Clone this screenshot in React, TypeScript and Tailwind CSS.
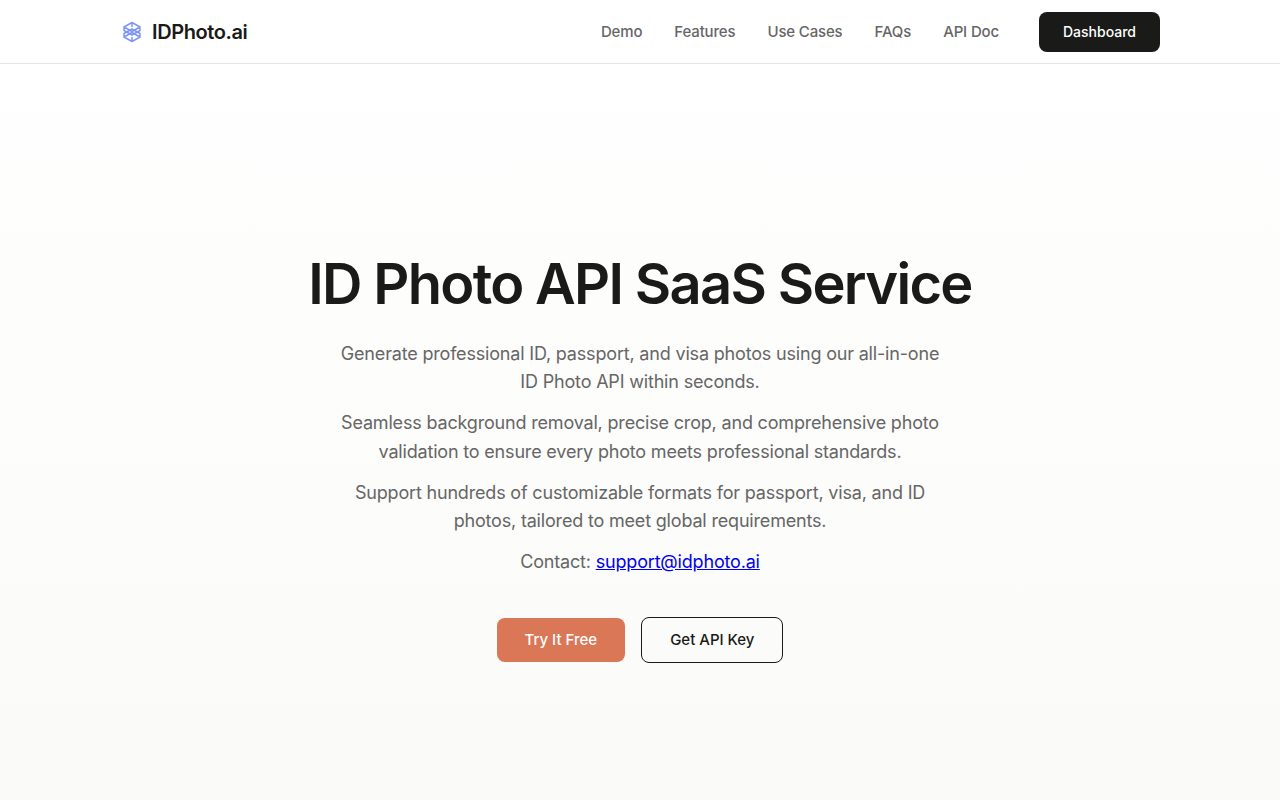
const links: [string, string][] = [
  ['Demo', '#demo'],
  ['Features', '#features'],
  ['Use Cases', '#use-cases'],
  ['FAQs', '#faqs'],
  ['API Doc', '#api-doc'],
];

function Logo() {
  return (
    <svg viewBox="0 0 24 24" className="size-6" fill="none" stroke="#7d96f5" strokeWidth="1.5" strokeLinecap="round" strokeLinejoin="round" aria-hidden="true">
      <path d="M12 2.500 20 7v3.500L12 15 4 10.500V7zM4 7l8 4.500L20 7M12 2.500v4" />
      <path d="M12 21.500 20 17v-3.500L12 9 4 13.500V17zM4 17l8-4.500 8 4.500M12 21.500v-4" />
    </svg>
  );
}

function Header() {
  return (
    <header className="border-b border-[#e5e5e5] bg-white">
      <div className="mx-auto flex h-[63px] max-w-[1088px] items-center justify-between px-6">
        <a href="#home" className="flex items-center gap-2 text-xl font-semibold tracking-[-0.02em]">
          <Logo />
          IDPhoto.ai
        </a>
        <div className="flex items-center gap-10">
          <nav className="flex items-center gap-8 text-[15px] leading-6 font-medium tracking-[-0.01em] text-[#666666]">
            {links.map(([label, href]) => (
              <a key={href} href={href}>{label}</a>
            ))}
          </nav>
          <button type="button" className="h-10 rounded-lg bg-[#1a1a18] px-6 text-sm font-medium text-white">
            Dashboard
          </button>
        </div>
      </div>
    </header>
  );
}

export default function App() {
  return (
    <div className="flex min-h-screen flex-col bg-linear-to-b from-white to-[#fafaf8] font-[Inter,sans-serif] text-[#1a1a18]">
      <Header />
      <main className="flex flex-1 flex-col items-center justify-center px-6 pt-[53px]">
        <h1 className="text-center text-[56px] leading-[1.1] font-semibold tracking-[-0.03em]">ID Photo API SaaS Service</h1>
        <div className="mt-6 flex max-w-[600px] flex-col gap-3 text-center text-lg leading-[1.6] tracking-[-0.01em] text-[#666666]">
          <p>Generate professional ID, passport, and visa photos using our all-in-one ID Photo API within seconds.</p>
          <p>Seamless background removal, precise crop, and comprehensive photo validation to ensure every photo meets professional standards.</p>
          <p>Support hundreds of customizable formats for passport, visa, and ID photos, tailored to meet global requirements.</p>
          <p>Contact: <a href="mailto:support@idphoto.ai" className="text-[#0000ee] underline">support@idphoto.ai</a></p>
        </div>
        <div className="mt-10 flex items-center gap-4 text-[15px] leading-6 font-medium">
          <button type="button" className="h-11 rounded-lg bg-[#d97757] px-7 text-white">Try It Free</button>
          <button type="button" className="h-[46px] rounded-lg border border-[#1a1a18] px-7">Get API Key</button>
        </div>
      </main>
    </div>
  );
}
